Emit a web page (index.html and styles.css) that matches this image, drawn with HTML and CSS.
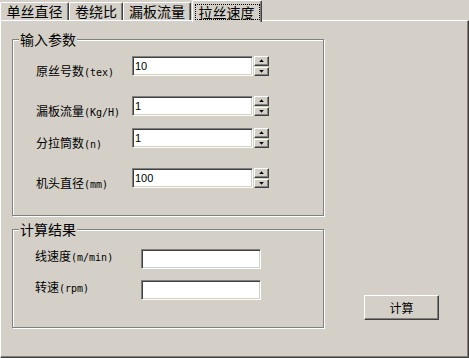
FILE: index.html
```html
<!DOCTYPE html>
<html lang="zh">
<head>
  <meta charset="UTF-8" />
  <title>拉丝速度</title>
  <link rel="stylesheet" href="styles.css">
</head>
<body>

<div class="tabs">
  <div class="tab t1">单丝直径</div>
  <div class="tab t2">卷绕比</div>
  <div class="tab t3">漏板流量</div>
  <div class="tab active"><span class="focus">拉丝速度</span></div>
</div>

<div class="panel">
  <div class="group input-group">
    <div class="group-title">输入参数</div>

    <div class="row">
      <label class="label">原丝号数<span class="unit">(tex)</span></label>
      <input class="edit" type="text" value="10">
      <div class="spin"><div class="spin-btn up"></div><div class="spin-btn down"></div></div>
    </div>
    <div class="row">
      <label class="label">漏板流量<span class="unit">(Kg/H)</span></label>
      <input class="edit" type="text" value="1">
      <div class="spin"><div class="spin-btn up"></div><div class="spin-btn down"></div></div>
    </div>
    <div class="row near">
      <label class="label">分拉筒数<span class="unit">(n)</span></label>
      <input class="edit" type="text" value="1">
      <div class="spin"><div class="spin-btn up"></div><div class="spin-btn down"></div></div>
    </div>
    <div class="row">
      <label class="label">机头直径<span class="unit">(mm)</span></label>
      <input class="edit" type="text" value="100">
      <div class="spin"><div class="spin-btn up"></div><div class="spin-btn down"></div></div>
    </div>
  </div>

  <div class="bottom">
    <div class="group output-group">
      <div class="group-title">计算结果</div>
      <div class="out-row">
        <label class="out-label">线速度<span class="unit">(m/min)</span></label>
        <input class="edit out-edit" type="text" value="">
      </div>
      <div class="out-row">
        <label class="out-label">转速<span class="unit">(rpm)</span></label>
        <input class="edit out-edit" type="text" value="">
      </div>
    </div>
    <button class="btn">计算</button>
  </div>
</div>

</body>
</html>
```

FILE: styles.css
```css
body {
  margin: 0;
  width: 469px;
  height: 358px;
  overflow: hidden;
  background: #d4d0c8;
  color: #000;
  font-family: "Noto Sans CJK SC", sans-serif;
}

/* tab strip */
.tabs {
  display: flex;
  align-items: flex-end;
  height: 20px;
  position: relative;
  z-index: 1;
}
.tab {
  box-sizing: border-box;
  height: 18px;
  border-top: 1px solid #fff;
  border-left: 1px solid #fff;
  border-right: 1px solid #404040;
  border-radius: 2px 2px 0 0;
  box-shadow: inset -1px 0 #808080;
  font-size: 14px;
  line-height: 16px;
  text-align: center;
  white-space: nowrap;
}
.t1 { width: 69px; }
.t2 { width: 54px; }
.t3 { width: 68px; }
.tab.active {
  width: 70px;
  height: 22px;
  margin-left: 1px;
  margin-bottom: -2px;
  padding-top: 3px;
  background: #d4d0c8;
}
.focus {
  display: inline-block;
  padding: 0 4px 0 3px;
  line-height: 14px;
  outline: 1px dotted #000;
}

/* page */
.panel {
  box-sizing: border-box;
  height: 338px;
  border-top: 1px solid #fff;
  border-left: 1px solid #fff;
  border-right: 1px solid #404040;
  border-bottom: 1px solid #404040;
  box-shadow: inset -1px -1px #808080;
  padding: 18px 0 0 11px;
}

.group {
  position: relative;
  box-sizing: border-box;
  width: 312px;
  border: 1px solid #808080;
  box-shadow: inset 1px 1px #fff, 1px 1px #fff;
}
.group-title {
  position: absolute;
  top: -8px;
  left: 6px;
  padding: 0 1px;
  background: #d4d0c8;
  font-size: 14px;
  line-height: 14px;
}
.input-group {
  height: 177px;
  padding: 16px 0 0 23px;
}

.row {
  display: flex;
  height: 20px;
}
.row + .row { margin-top: 20px; }
.row.near { margin-top: 12px; }

.label {
  width: 96px;
  padding-top: 8px;
  font-size: 12px;
  line-height: 14px;
  white-space: nowrap;
}
.unit {
  font-family: "DejaVu Sans Mono", monospace;
  font-size: 10px;
}

.edit {
  box-sizing: border-box;
  width: 121px;
  height: 20px;
  margin: 0;
  padding: 0 2px;
  border: 1px solid;
  border-color: #808080 #fff #fff #808080;
  box-shadow: inset 1px 1px #404040, inset -1px -1px #d4d0c8;
  background: #fff;
  font: 11px "Liberation Sans", sans-serif;
  color: #000;
  outline: none;
}

.spin {
  display: flex;
  flex-direction: column;
  gap: 1px;
  margin-left: 1px;
}
.spin-btn {
  box-sizing: border-box;
  width: 15px;
  height: 10px;
  border: 1px solid;
  border-color: #fff #404040 #404040 #fff;
  box-shadow: inset -1px -1px #808080;
  display: flex;
  align-items: center;
  justify-content: center;
}
.spin-btn::after {
  content: "";
  width: 5px;
  height: 3px;
  background: #000;
}
.up::after { clip-path: polygon(50% 0, 100% 100%, 0 100%); }
.down::after { clip-path: polygon(0 0, 100% 0, 50% 100%); }

/* results */
.bottom {
  display: flex;
  align-items: flex-end;
  margin-top: 13px;
}
.output-group {
  height: 99px;
  padding: 19px 0 0 22px;
}
.out-row {
  display: flex;
  height: 20px;
}
.out-row + .out-row { margin-top: 11px; }
.out-label {
  width: 106px;
  font-size: 12px;
  line-height: 14px;
  white-space: nowrap;
}
.out-edit { width: 120px; }

.btn {
  box-sizing: border-box;
  width: 75px;
  height: 25px;
  margin: 0 0 8px 40px;
  padding: 0;
  border: 1px solid;
  border-color: #fff #404040 #404040 #fff;
  box-shadow: inset -1px -1px #808080;
  background: #d4d0c8;
  font-family: "Noto Sans CJK SC", sans-serif;
  font-size: 12px;
  color: #000;
}
```
